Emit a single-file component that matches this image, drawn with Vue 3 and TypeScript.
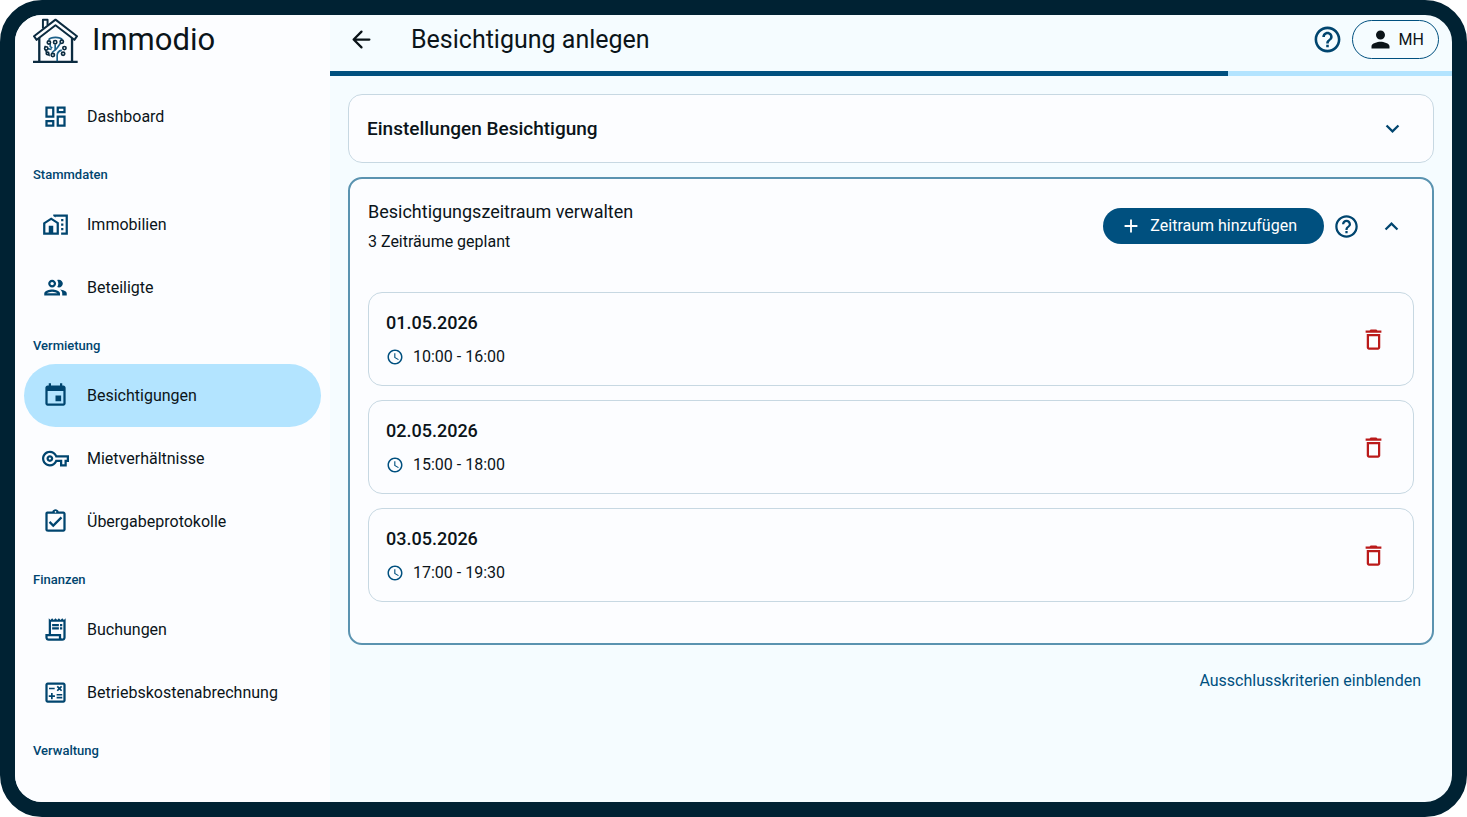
<script setup lang="ts">
import { ref } from 'vue'

interface NavItem {
  label: string
  icon: string
}

interface NavGroup {
  title: string
  items: NavItem[]
}

interface Slot {
  date: string
  time: string
}

const icons = {
  dashboard:
    'M19 5v2h-4V5h4M9 5v6H5V5h4m10 8v6h-4v-6h4M9 17v2H5v-2h4M21 3h-8v6h8V3zM11 3H3v10h8V3zm10 8h-8v10h8V11zm-10 4H3v6h8v-6z',
  homeWork:
    'M17 15h2v2h-2zM17 11h2v2h-2zM17 7h2v2h-2zM10 3v1.51l2 1.33V5h9v14h-4v2h6V3zM8.17 5.7L15 10.25V21H1V10.48zM10 19h3v-7.84L8.17 8.09 3 11.38V19h3v-6h4z',
  group:
    'M9 13.75c-2.34 0-7 1.17-7 3.5V19h14v-1.75c0-2.33-4.66-3.5-7-3.5zM4.34 17c.84-.58 2.87-1.25 4.66-1.25s3.82.67 4.66 1.25H4.34zM9 12c1.93 0 3.5-1.57 3.5-3.5S10.93 5 9 5 5.5 6.57 5.5 8.5 7.07 12 9 12zm0-5c.83 0 1.5.67 1.5 1.5S9.83 10 9 10s-1.5-.67-1.5-1.5S8.17 7 9 7zm7.04 6.81c1.16.84 1.96 1.96 1.96 3.44V19h4v-1.75c0-2.02-3.5-3.17-5.96-3.44zM15 12c1.93 0 3.5-1.57 3.5-3.5S16.93 5 15 5c-.54 0-1.04.13-1.5.35.63.89 1 1.98 1 3.15s-.37 2.26-1 3.15c.46.22.96.35 1.5.35z',
  event:
    'M17 12h-5v5h5v-5zM16 1v2H8V1H6v2H5c-1.11 0-1.99.9-1.99 2L3 19c0 1.1.89 2 2 2h14c1.1 0 2-.9 2-2V5c0-1.1-.9-2-2-2h-1V1h-2zm3 18H5V8h14v11z',
  key: 'M22 19h-6v-4h-2.68c-1.14 2.42-3.6 4-6.32 4-3.86 0-7-3.14-7-7s3.14-7 7-7c2.72 0 5.17 1.58 6.32 4H24v6h-2v4zm-4-2h2v-4h2v-2H11.94l-.23-.67C11.01 8.34 9.11 7 7 7c-2.76 0-5 2.24-5 5s2.24 5 5 5c2.11 0 4.01-1.34 4.71-3.33l.23-.67H18v4zM7 15c-1.65 0-3-1.35-3-3s1.35-3 3-3 3 1.35 3 3-1.35 3-3 3zm0-4c-.55 0-1 .45-1 1s.45 1 1 1 1-.45 1-1-.45-1-1-1z',
  clipboard:
    'M18 9l-1.41-1.42L10 14.17l-2.59-2.58L6 13l4 4zm1-6h-4.18C14.4 1.84 13.3 1 12 1s-2.4.84-2.82 2H5c-.14 0-.27.01-.4.04-.39.08-.74.28-1.01.55-.18.18-.33.4-.43.64-.1.23-.16.49-.16.77v14c0 .27.06.54.16.78s.25.45.43.64c.27.27.62.47 1.01.55.13.02.26.03.4.03h14c1.1 0 2-.9 2-2V5c0-1.1-.9-2-2-2zm-7-.25c.41 0 .75.34.75.75s-.34.75-.75.75-.75-.34-.75-.75.34-.75.75-.75zM19 19H5V5h14v14z',
  receipt:
    'M19.5 3.5L18 2l-1.5 1.5L15 2l-1.5 1.5L12 2l-1.5 1.5L9 2 7.5 3.5 6 2v14H3v3c0 1.66 1.34 3 3 3h12c1.66 0 3-1.34 3-3V2l-1.5 1.5zM15 20H6c-.55 0-1-.45-1-1v-1h10v2zm4-1c0 .55-.45 1-1 1s-1-.45-1-1v-3H8V5h11v14zM9 7h6v2H9zM16 7h2v2h-2zM9 10h6v2H9zM16 10h2v2h-2z',
  calculate:
    'M19 3H5c-1.1 0-2 .9-2 2v14c0 1.1.9 2 2 2h14c1.1 0 2-.9 2-2V5c0-1.1-.9-2-2-2zm0 16H5V5h14v14zM6.25 7.72h5v1.5h-5zM13 15.75h5v1.5h-5zM13 13.25h5v1.5h-5zM8 18h1.5v-2h2v-1.5h-2v-2H8v2H6V16h2zM14.09 10.95l1.41-1.41 1.41 1.41 1.06-1.06-1.41-1.42 1.41-1.41L16.91 6 15.5 7.41 14.09 6l-1.06 1.06 1.41 1.41-1.41 1.42z',
  help: 'M11 18h2v-2h-2v2zm1-16C6.48 2 2 6.48 2 12s4.48 10 10 10 10-4.48 10-10S17.52 2 12 2zm0 18c-4.41 0-8-3.59-8-8s3.59-8 8-8 8 3.59 8 8-3.59 8-8 8zm0-14c-2.21 0-4 1.79-4 4h2c0-1.1.9-2 2-2s2 .9 2 2c0 2-3 1.75-3 5h2c0-2.25 3-2.5 3-5 0-2.21-1.79-4-4-4z',
  person:
    'M12 12c2.21 0 4-1.79 4-4s-1.79-4-4-4-4 1.79-4 4 1.79 4 4 4zm0 2c-2.67 0-8 1.34-8 4v2h16v-2c0-2.66-5.33-4-8-4z',
  expandMore: 'M16.59 8.59L12 13.17 7.41 8.59 6 10l6 6 6-6z',
  expandLess: 'M12 8l-6 6 1.41 1.41L12 10.83l4.59 4.58L18 14z',
  add: 'M19 13h-6v6h-2v-6H5v-2h6V5h2v6h6v2z',
  clock:
    'M11.99 2C6.47 2 2 6.48 2 12s4.47 10 9.99 10C17.52 22 22 17.52 22 12S17.52 2 11.99 2zM12 20c-4.42 0-8-3.58-8-8s3.58-8 8-8 8 3.58 8 8-3.58 8-8 8zm.5-13H11v6l5.25 3.15.75-1.23-4.5-2.67z',
  trash:
    'M6 19c0 1.1.9 2 2 2h8c1.1 0 2-.9 2-2V7H6v12zM8 9h8v10H8V9zm7.5-5l-1-1h-5l-1 1H5v2h14V4z',
}

const groups: NavGroup[] = [
  { title: '', items: [{ label: 'Dashboard', icon: icons.dashboard }] },
  {
    title: 'Stammdaten',
    items: [
      { label: 'Immobilien', icon: icons.homeWork },
      { label: 'Beteiligte', icon: icons.group },
    ],
  },
  {
    title: 'Vermietung',
    items: [
      { label: 'Besichtigungen', icon: icons.event },
      { label: 'Mietverhältnisse', icon: icons.key },
      { label: 'Übergabeprotokolle', icon: icons.clipboard },
    ],
  },
  {
    title: 'Finanzen',
    items: [
      { label: 'Buchungen', icon: icons.receipt },
      { label: 'Betriebskostenabrechnung', icon: icons.calculate },
    ],
  },
  { title: 'Verwaltung', items: [] },
]

const active = ref('Besichtigungen')
const progress = ref(80)
const slots = ref<Slot[]>([
  { date: '01.05.2026', time: '10:00 - 16:00' },
  { date: '02.05.2026', time: '15:00 - 18:00' },
  { date: '03.05.2026', time: '17:00 - 19:30' },
])

function removeSlot(index: number): void {
  slots.value.splice(index, 1)
}
</script>

<template>
  <div class="frame">
    <aside class="sidebar">
      <div class="brand">
        <svg class="logo" viewBox="24 18 136 136" fill="none" stroke="#0b2b40" stroke-width="6" stroke-linejoin="round" aria-hidden="true">
          <path d="M54 50V23h14v16" />
          <path d="M43 78v72M142 78v72" stroke-width="7" />
          <path d="M92 23L27 73l8 11 57-44 57 44 8-11z" fill="#fcfdff" />
          <path d="M24 151h135" stroke-width="7" />
          <g stroke="#1c5f88" stroke-width="5">
            <path d="M71 84c8-10 34-10 42 0" />
            <path d="M61 102c-1 12 4 24 14 30" stroke="#2b4558" />
            <path d="M97 149v-18c0-10 6-14 14-16M91 98v16l-10 9M108 93l-10 14-7 8M76 96v8l6 5M69 111l11 2" />
          </g>
          <g fill="#fcfdff" stroke="#0b2b40" stroke-width="5">
            <circle cx="72" cy="92" r="5" />
            <circle cx="91" cy="91" r="5" />
            <circle cx="111" cy="90" r="5" />
            <circle cx="64" cy="110" r="5" />
            <circle cx="119" cy="109" r="5" />
            <circle cx="68" cy="125" r="4" />
            <circle cx="84" cy="130" r="5" />
            <circle cx="115" cy="126" r="5" />
          </g>
        </svg>
        <span class="brand-name">Immodio</span>
      </div>
      <nav class="nav" aria-label="Hauptnavigation">
        <section v-for="(group, i) in groups" :key="i">
          <h2 v-if="group.title" class="nav-title">{{ group.title }}</h2>
          <a
            v-for="item in group.items"
            :key="item.label"
            href="#"
            class="nav-item"
            :class="{ active: item.label === active }"
            @click.prevent="active = item.label"
          >
            <svg class="icon" viewBox="0 0 24 24" aria-hidden="true"><path :d="item.icon" /></svg>
            <span>{{ item.label }}</span>
          </a>
        </section>
      </nav>
    </aside>

    <div class="page">
      <header class="topbar">
        <button class="icon-button dark" type="button" aria-label="Zurück">
          <svg class="icon stroke" viewBox="0 0 24 24" aria-hidden="true"><path d="M19 12H5M12 5l-7 7 7 7" /></svg>
        </button>
        <h1 class="page-title">Besichtigung anlegen</h1>
        <button class="icon-button" type="button" aria-label="Hilfe">
          <svg class="icon large" viewBox="0 0 24 24" aria-hidden="true"><path :d="icons.help" /></svg>
        </button>
        <button class="account" type="button">
          <svg class="icon" viewBox="0 0 24 24" aria-hidden="true"><path :d="icons.person" /></svg>
          <span>MH</span>
        </button>
      </header>
      <div class="progress" role="progressbar" aria-label="Fortschritt" :aria-valuenow="progress">
        <div class="progress-value" :style="{ width: progress + '%' }"></div>
      </div>

      <main class="content">
        <section class="card settings">
          <h2 class="card-title strong">Einstellungen Besichtigung</h2>
          <button class="icon-button" type="button" aria-label="Einstellungen aufklappen">
            <svg class="icon" viewBox="0 0 24 24" aria-hidden="true"><path :d="icons.expandMore" /></svg>
          </button>
        </section>

        <section class="card periods">
          <div class="periods-head">
            <div class="periods-text">
              <h2 class="card-title">Besichtigungszeitraum verwalten</h2>
              <p class="subtitle">{{ slots.length }} Zeiträume geplant</p>
            </div>
            <button class="add" type="button">
              <svg class="icon add-icon" viewBox="0 0 24 24" aria-hidden="true"><path :d="icons.add" /></svg>
              <span>Zeitraum hinzufügen</span>
            </button>
            <button class="icon-button help" type="button" aria-label="Hilfe zum Zeitraum">
              <svg class="icon" viewBox="0 0 24 24" aria-hidden="true"><path :d="icons.help" /></svg>
            </button>
            <button class="icon-button" type="button" aria-label="Zeiträume zuklappen">
              <svg class="icon" viewBox="0 0 24 24" aria-hidden="true"><path :d="icons.expandLess" /></svg>
            </button>
          </div>
          <ul class="slots">
            <li v-for="(slot, index) in slots" :key="slot.date" class="slot">
              <div>
                <h3 class="slot-date">{{ slot.date }}</h3>
                <p class="slot-time">
                  <svg class="icon small" viewBox="0 0 24 24" aria-hidden="true"><path :d="icons.clock" /></svg>
                  <span>{{ slot.time }}</span>
                </p>
              </div>
              <button class="icon-button danger" type="button" :aria-label="slot.date + ' löschen'" @click="removeSlot(index)">
                <svg class="icon" viewBox="0 0 24 24" aria-hidden="true"><path :d="icons.trash" /></svg>
              </button>
            </li>
          </ul>
        </section>

        <button class="text-button" type="button">Ausschlusskriterien einblenden</button>
      </main>
    </div>
  </div>
</template>

<style>
html,
body,
#app {
  height: 100%;
}

body {
  margin: 0;
  background: #ffffff;
}
</style>

<style scoped>
* {
  box-sizing: border-box;
}

.frame {
  display: flex;
  height: 100vh;
  overflow: hidden;
  border: 15px solid #002233;
  border-radius: 42px;
  background: #f5fcff;
  color: #0b1419;
  font-family: Roboto, 'Liberation Sans', sans-serif;
  font-size: 16px;
  line-height: 24px;
}

h1,
h2,
h3,
p,
ul {
  margin: 0;
  padding: 0;
  font-weight: 400;
}

button {
  display: flex;
  align-items: center;
  padding: 0;
  border: 0;
  background: none;
  color: inherit;
  font: inherit;
  cursor: pointer;
}

.icon {
  display: block;
  flex: none;
  width: 27px;
  height: 27px;
  fill: currentColor;
}

.icon.large {
  width: 31px;
  height: 31px;
}

.icon.small {
  width: 18px;
  height: 18px;
  color: #00507f;
}

.icon.stroke {
  fill: none;
  stroke: currentColor;
  stroke-width: 2;
  stroke-linecap: round;
  stroke-linejoin: round;
}

.icon-button {
  color: #00456f;
}

.icon-button.dark {
  color: #0b1419;
}

.sidebar {
  flex: none;
  width: 315px;
  background: #fcfdff;
}

.brand {
  display: flex;
  align-items: center;
  gap: 14px;
  height: 70px;
  padding: 0 18px 20px;
}

.logo {
  width: 45px;
  height: 45px;
}

.brand-name {
  font-size: 31px;
  line-height: 40px;
}

.nav {
  padding: 0 9px;
}

.nav-title {
  height: 45px;
  padding: 18px 9px 0;
  color: #00456f;
  font-size: 13px;
  font-weight: 500;
  line-height: 18px;
}

.nav-item {
  display: flex;
  align-items: center;
  gap: 18px;
  height: 63px;
  padding: 0 18px;
  border-radius: 32px;
  color: inherit;
  text-decoration: none;
}

.nav-item .icon {
  color: #00456f;
}

.nav-item.active {
  background: #b3e4ff;
}

.page {
  flex: 1;
  min-width: 0;
}

.topbar {
  display: flex;
  align-items: center;
  height: 56px;
  padding: 0 13px 7px 18px;
}

.page-title {
  flex: 1;
  margin-left: 36px;
  font-size: 25px;
  line-height: 32px;
}

.account {
  gap: 5px;
  height: 39px;
  margin-left: 9px;
  padding: 0 14px;
  border: 1px solid #00507f;
  border-radius: 20px;
}

.progress {
  height: 5px;
  background: #b3e4ff;
}

.progress-value {
  height: 100%;
  background: #00507f;
}

.content {
  display: flex;
  flex-direction: column;
  gap: 14px;
  padding: 18px;
}

.card {
  border: 1px solid #c7d8e2;
  border-radius: 14px;
  background: #fcfdff;
}

.settings {
  display: flex;
  align-items: center;
  justify-content: space-between;
  padding: 20px 27px 20px 18px;
}

.card-title {
  font-size: 18px;
  line-height: 27px;
}

.card-title.strong {
  font-size: 19px;
  font-weight: 500;
}

.periods {
  padding: 19px 18px 41px;
  border: 2px solid #5a93b0;
}

.periods-head {
  display: flex;
  align-items: center;
  margin-bottom: 38px;
  padding-right: 9px;
}

.periods-text {
  flex: 1;
}

.subtitle {
  margin-top: 5px;
}

.add {
  gap: 8px;
  height: 36px;
  padding: 0 27px 0 17px;
  border-radius: 18px;
  background: #00507f;
  color: #ffffff;
}

.add-icon {
  width: 22px;
  height: 22px;
}

.help {
  margin: 0 18px 0 9px;
}

.slots {
  display: flex;
  flex-direction: column;
  gap: 14px;
  list-style: none;
}

.slot {
  display: flex;
  align-items: center;
  justify-content: space-between;
  padding: 16px 26px 16px 17px;
  border: 1px solid #c7d8e2;
  border-radius: 14px;
}

.slot-date {
  font-size: 18px;
  font-weight: 500;
  line-height: 27px;
}

.slot-time {
  display: flex;
  align-items: center;
  gap: 9px;
  margin-top: 9px;
}

.danger {
  color: #ba1a1a;
}

.text-button {
  align-self: flex-end;
  margin: 10px 13px 0 0;
  color: #00507f;
}
</style>
